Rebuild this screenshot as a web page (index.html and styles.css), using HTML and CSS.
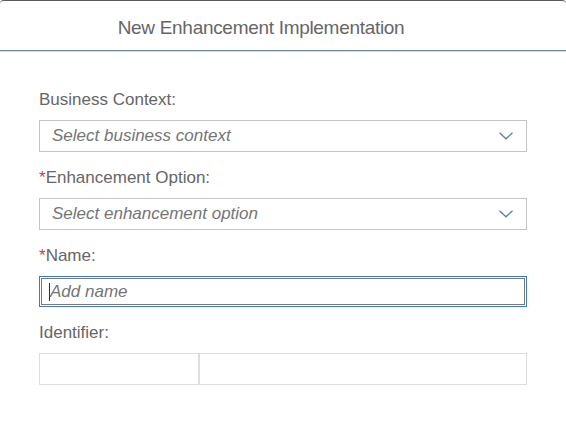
FILE: index.html
```html
<!DOCTYPE html>
<html lang="en">
<head>
  <meta charset="UTF-8">
  <meta name="viewport" content="width=device-width, initial-scale=1.0">
  <title>New Enhancement Implementation</title>
  <link rel="stylesheet" href="styles.css">
</head>
<body>
  <div class="dialog">
    <div class="dialog-header">New Enhancement Implementation</div>

    <form class="dialog-form">
      <div class="field">
        <label class="field-label">Business Context:</label>
        <div class="combo">
          <span class="combo-text">Select business context</span>
          <svg class="combo-arrow" width="14" height="8" viewBox="0 0 14 8">
            <polyline points="0.5,0.8 7,6.8 13.5,0.8" fill="none" stroke="#5d7fa5" stroke-width="1.3"/>
          </svg>
        </div>
      </div>

      <div class="field">
        <label class="field-label"><span class="required">*</span>Enhancement Option:</label>
        <div class="combo">
          <span class="combo-text">Select enhancement option</span>
          <svg class="combo-arrow" width="14" height="8" viewBox="0 0 14 8">
            <polyline points="0.5,0.8 7,6.8 13.5,0.8" fill="none" stroke="#5d7fa5" stroke-width="1.3"/>
          </svg>
        </div>
      </div>

      <div class="field">
        <label class="field-label" for="name"><span class="required">*</span>Name:</label>
        <div class="input-wrap">
          <input class="text-input focused" id="name" type="text" placeholder="Add name">
          <span class="caret"></span>
        </div>
      </div>

      <div class="field">
        <label class="field-label">Identifier:</label>
        <div class="identifier">
          <div class="id-box id-prefix"></div>
          <div class="id-box id-rest"></div>
        </div>
      </div>
    </form>
  </div>
</body>
</html>
```

FILE: styles.css
```css
body {
  margin: 0;
  padding: 0;
  background-color: #fff;
  font-family: "Liberation Sans", Arial, sans-serif;
  color: #666;
}

.dialog {
  background: #fff;
}

.dialog-header {
  border-top: 1px solid #5a5a5a;
  border-radius: 4px 4px 0 0;
  border-bottom: 1px solid #6f8396;
  box-shadow: 0 1px 0 #d3dbe3;
  padding: 5px 44px 0 0;
  height: 44px;
  line-height: 44px;
  text-align: center;
  font-size: 19px;
  letter-spacing: -0.3px;
  color: #666;
}

.dialog-form {
  padding: 39px 39px 0 39px;
}

.field {
  margin-bottom: 16px;
}

.field-label {
  display: block;
  font-size: 17px;
  line-height: 20px;
  margin-bottom: 10px;
  color: #666;
}

.required {
  color: #d0403a;
}

.combo {
  height: 32px;
  box-sizing: border-box;
  border: 1px solid #c4c4c4;
  display: flex;
  align-items: center;
  justify-content: space-between;
  padding: 0 13px 0 12px;
}

.combo-text {
  font-size: 17px;
  font-style: italic;
  color: #757575;
}

.combo-arrow {
  display: block;
}

.input-wrap {
  position: relative;
}

.text-input {
  display: block;
  width: 100%;
  height: 31px;
  box-sizing: border-box;
  border: 1px solid #c4c4c4;
  padding: 0 10px;
  font-family: "Liberation Sans", Arial, sans-serif;
  font-size: 17px;
  color: #333;
  outline: none;
}

.text-input::placeholder {
  font-style: italic;
  color: #757575;
}

.text-input.focused,
.text-input:focus {
  border-color: #427cac;
  box-shadow: inset 0 0 0 1px #fff, inset 0 0 0 2px #7a7a7a;
}

/* text cursor drawn over the focused input */
.caret {
  position: absolute;
  left: 10px;
  top: 7px;
  width: 1px;
  height: 18px;
  background: #333;
}

.identifier {
  display: flex;
  height: 32px;
}

.id-box {
  box-sizing: border-box;
  height: 32px;
  border: 1px solid #dedede;
  background: #fff;
}

.id-prefix {
  width: 160px;
}

.id-rest {
  flex: 1;
}
```
